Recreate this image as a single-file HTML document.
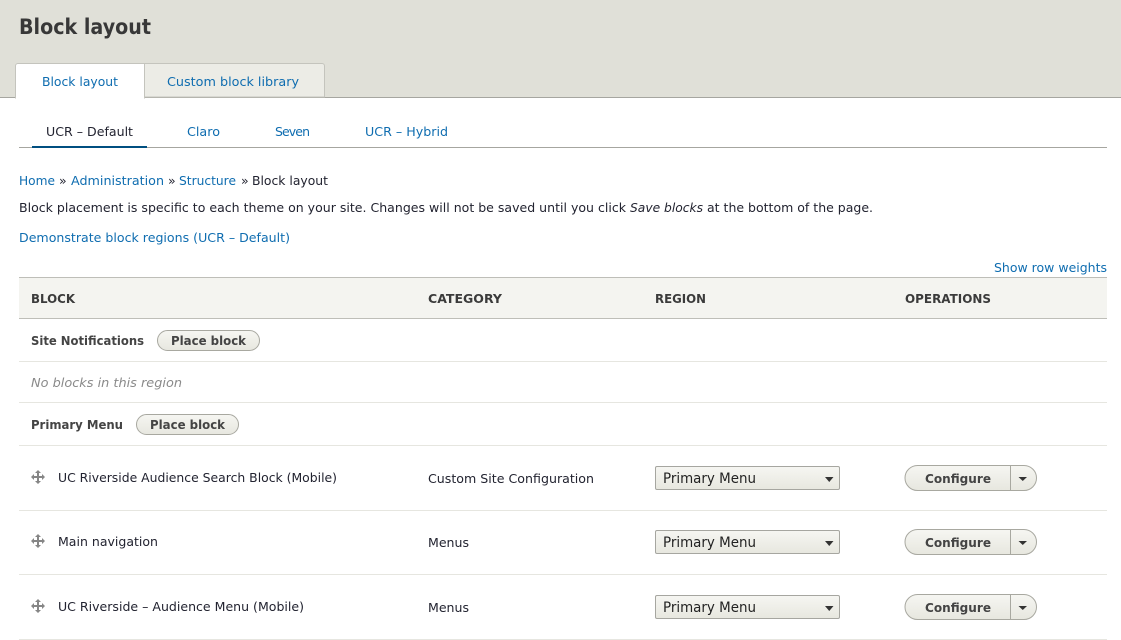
<!DOCTYPE html>
<html lang="en"><head><meta charset="utf-8"><title>Block layout</title>
<style>
html,body{margin:0;padding:0;background:#fff;width:1121px;height:640px;overflow:hidden}
svg{display:block}
text{font-family:"DejaVu Sans","Liberation Sans",sans-serif;font-size:12.5px;fill:#222330}
.l{fill:#0f6db0}
.b{font-weight:bold}
.bt{font-weight:bold;font-size:12px;fill:#444}
.th{font-weight:bold;font-size:12px;fill:#3b3b3b}
.sel{font-size:14px;fill:#222}
</style></head><body>
<svg width="1121" height="640" viewBox="0 0 1121 640" xmlns="http://www.w3.org/2000/svg">
<defs>
<linearGradient id="g" x1="0" y1="0" x2="0" y2="1"><stop offset="0" stop-color="#f6f6f2"/><stop offset="1" stop-color="#e7e7df"/></linearGradient>
<g id="mv" fill="#868686"><rect x="-6" y="-1" width="12" height="2"/><rect x="-1" y="-6" width="2" height="12"/><path d="M-7 0l3-3v6zM7 0l-3-3v6zM0-7l-3 3h6zM0 7l-3-3h6z"/></g>
<g id="sel"><rect x=".5" y=".5" width="184" height="23" rx="1.5" fill="url(#g)" stroke="#a6a6a0"/><path d="M170 11h8.500l-4.250 5z" fill="#333"/></g>
<g id="op"><path d="M105.500 .5H12.500a12 12 0 0 0 0 25h93z" fill="url(#g)" stroke="#a8a8a0"/><path d="M105.500 .5H119a12 12 0 0 1 0 25h-13.500z" fill="url(#g)" stroke="#a8a8a0"/><path d="M113.500 12h8.500l-4.250 4z" fill="#333"/></g>
</defs>
<rect width="1121" height="97" fill="#e0e0d8"/>
<rect y="97" width="1121" height="1" fill="#a6a6a0"/>
<text x="19" y="34" class="b" style="font-size:21px;fill:#383838" textLength="132" lengthAdjust="spacingAndGlyphs">Block layout</text>
<path d="M144.500 97V63.500H322a2.500 2.500 0 0 1 2.500 2.500V97z" fill="#ecece6" stroke="#c4c4bd"/>
<path d="M15.500 98V66a2.500 2.500 0 0 1 2.500-2.500H144.500V98z" fill="#fff" stroke="#c4c4bd"/>
<rect x="16" y="97" width="128" height="2" fill="#fff"/>
<text x="42" y="86" class="l" textLength="76" lengthAdjust="spacingAndGlyphs">Block layout</text>
<text x="167" y="86" class="l" textLength="132" lengthAdjust="spacingAndGlyphs">Custom block library</text>
<rect x="19" y="147" width="1088" height="1" fill="#a6a6a0"/>
<rect x="32" y="146" width="115" height="2" fill="#004f80"/>
<text x="46" y="136" textLength="87" lengthAdjust="spacingAndGlyphs">UCR – Default</text>
<text x="187" y="136" class="l" textLength="33" lengthAdjust="spacingAndGlyphs">Claro</text>
<text x="275" y="136" class="l" textLength="35" lengthAdjust="spacing">Seven</text>
<text x="365" y="136" class="l" textLength="83" lengthAdjust="spacingAndGlyphs">UCR – Hybrid</text>
<text x="19" y="185" class="l" textLength="36" lengthAdjust="spacingAndGlyphs">Home</text>
<text x="59" y="185" textLength="8">»</text>
<text x="71" y="185" class="l" textLength="93" lengthAdjust="spacingAndGlyphs">Administration</text>
<text x="168" y="185" textLength="7">»</text>
<text x="179" y="185" class="l" textLength="57" lengthAdjust="spacingAndGlyphs">Structure</text>
<text x="241" y="185" textLength="7">»</text>
<text x="252" y="185" textLength="76" lengthAdjust="spacingAndGlyphs">Block layout</text>
<text x="19" y="212" textLength="607" lengthAdjust="spacingAndGlyphs">Block placement is specific to each theme on your site. Changes will not be saved until you click</text>
<text x="630" y="212" font-style="italic" textLength="73" lengthAdjust="spacingAndGlyphs">Save blocks</text>
<text x="707" y="212" textLength="166" lengthAdjust="spacingAndGlyphs">at the bottom of the page.</text>
<text x="19" y="242" class="l" textLength="271" lengthAdjust="spacingAndGlyphs">Demonstrate block regions (UCR – Default)</text>
<text x="994" y="272" class="l" textLength="113" lengthAdjust="spacingAndGlyphs">Show row weights</text>
<rect x="19" y="277" width="1088" height="42" fill="#f4f4f0"/>
<rect x="19" y="277" width="1088" height="1" fill="#bebeb8"/>
<rect x="19" y="318" width="1088" height="1" fill="#bebeb8"/>
<text x="31" y="303" class="th" textLength="44" lengthAdjust="spacingAndGlyphs">BLOCK</text>
<text x="428" y="303" class="th" textLength="74" lengthAdjust="spacingAndGlyphs">CATEGORY</text>
<text x="655" y="303" class="th" textLength="51" lengthAdjust="spacingAndGlyphs">REGION</text>
<text x="905" y="303" class="th" textLength="86" lengthAdjust="spacingAndGlyphs">OPERATIONS</text>
<text x="31" y="345" class="bt" textLength="113" lengthAdjust="spacingAndGlyphs">Site Notifications</text>
<rect x="157.500" y="330.500" width="102" height="20" rx="10" fill="url(#g)" stroke="#a8a8a0"/>
<text x="171" y="345" class="bt" textLength="75" lengthAdjust="spacingAndGlyphs">Place block</text>
<rect x="19" y="361" width="1088" height="1" fill="#e6e6e0"/>
<text x="31" y="387" font-style="italic" style="fill:#8a8a8a" textLength="151" lengthAdjust="spacingAndGlyphs">No blocks in this region</text>
<rect x="19" y="402" width="1088" height="1" fill="#e6e6e0"/>
<text x="31" y="429" class="bt" textLength="92" lengthAdjust="spacingAndGlyphs">Primary Menu</text>
<rect x="136.500" y="414.500" width="102" height="20" rx="10" fill="url(#g)" stroke="#a8a8a0"/>
<text x="150" y="429" class="bt" textLength="75" lengthAdjust="spacingAndGlyphs">Place block</text>
<rect x="19" y="445" width="1088" height="1" fill="#e6e6e0"/>
<use href="#mv" x="38" y="477"/>
<text x="58" y="482" textLength="279" lengthAdjust="spacingAndGlyphs">UC Riverside Audience Search Block (Mobile)</text>
<text x="428" y="483" textLength="166" lengthAdjust="spacingAndGlyphs">Custom Site Configuration</text>
<use href="#sel" x="655" y="466"/>
<text x="663" y="483" class="sel" textLength="93" lengthAdjust="spacingAndGlyphs">Primary Menu</text>
<use href="#op" x="905" y="465"/>
<text x="925" y="483" class="bt" textLength="66" lengthAdjust="spacingAndGlyphs">Configure</text>
<rect x="19" y="510" width="1088" height="1" fill="#e6e6e0"/>
<use href="#mv" x="38" y="541"/>
<text x="58" y="546" textLength="100" lengthAdjust="spacingAndGlyphs">Main navigation</text>
<text x="428" y="547" textLength="41" lengthAdjust="spacingAndGlyphs">Menus</text>
<use href="#sel" x="655" y="530"/>
<text x="663" y="547" class="sel" textLength="93" lengthAdjust="spacingAndGlyphs">Primary Menu</text>
<use href="#op" x="905" y="529"/>
<text x="925" y="547" class="bt" textLength="66" lengthAdjust="spacingAndGlyphs">Configure</text>
<rect x="19" y="574" width="1088" height="1" fill="#e6e6e0"/>
<use href="#mv" x="38" y="606"/>
<text x="58" y="611" textLength="246" lengthAdjust="spacingAndGlyphs">UC Riverside – Audience Menu (Mobile)</text>
<text x="428" y="612" textLength="41" lengthAdjust="spacingAndGlyphs">Menus</text>
<use href="#sel" x="655" y="595"/>
<text x="663" y="612" class="sel" textLength="93" lengthAdjust="spacingAndGlyphs">Primary Menu</text>
<use href="#op" x="905" y="594"/>
<text x="925" y="612" class="bt" textLength="66" lengthAdjust="spacingAndGlyphs">Configure</text>
<rect x="19" y="639" width="1088" height="1" fill="#e6e6e0"/>
</svg>
</body></html>
